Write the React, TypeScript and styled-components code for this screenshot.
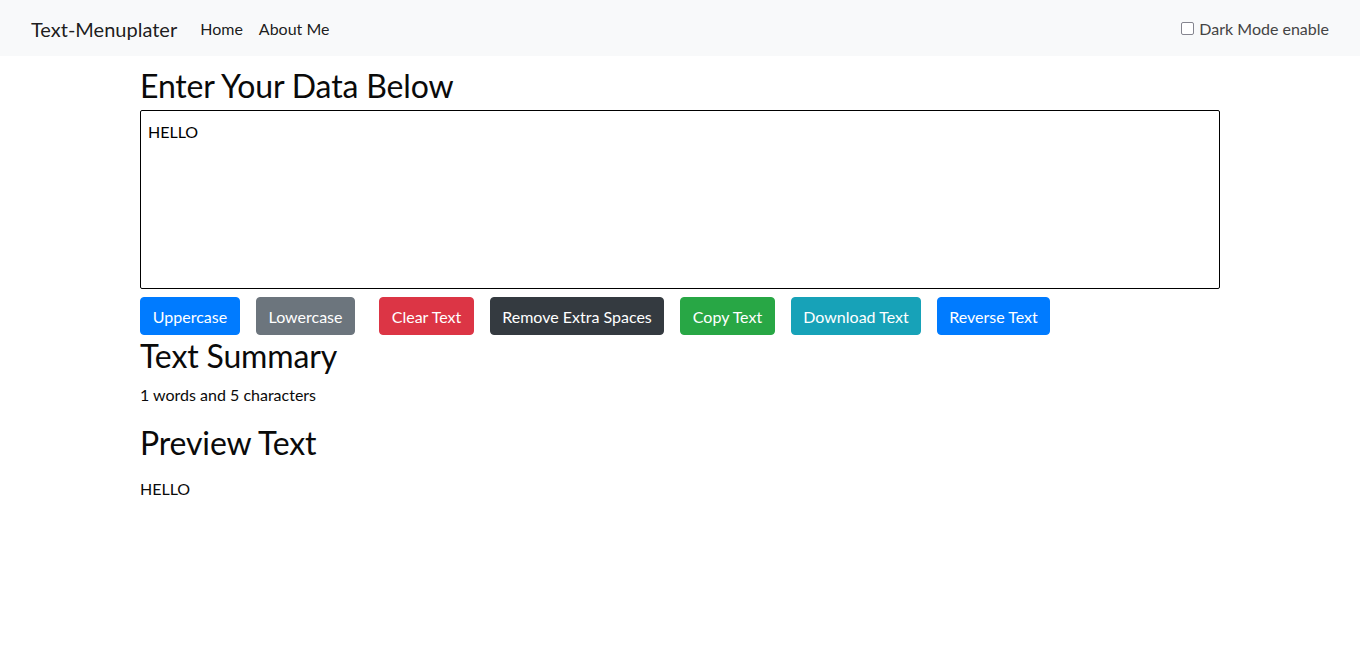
import React, { useState } from "react";
import styled, { createGlobalStyle } from "styled-components";

const GlobalStyle = createGlobalStyle`
  * { box-sizing: border-box; }
  body {
    margin: 0;
    background: #fff;
    color: #212529;
    font-family: Lato, "Noto Sans", sans-serif;
    font-size: 16px;
    line-height: 1.5;
  }
`;

const Navbar = styled.nav`
  height: 56px;
  background: #f8f9fa;
  display: flex;
  align-items: center;
  padding: 2px 31px 0 31px;
`;

const Brand = styled.a`
  font-size: 20px;
  line-height: 30px;
  color: rgba(0, 0, 0, 0.9);
  text-decoration: none;
  margin-right: 15px;
`;

const NavList = styled.ul`
  display: flex;
  list-style: none;
  margin: 0;
  padding: 0;
  flex: 1;
`;

const NavLink = styled.a`
  display: block;
  padding: 8px;
  color: rgba(0, 0, 0, 0.9);
  text-decoration: none;
  line-height: 24px;
`;

const Toggle = styled.label`
  display: flex;
  align-items: center;
  gap: 5px;
  color: #444;
  line-height: 24px;
`;

const CheckBox = styled.span`
  width: 13px;
  height: 13px;
  border: 1.5px solid #85858f;
  border-radius: 2px;
  background: #fff;
  margin-top: -1px;
`;

const Container = styled.main`
  max-width: 1080px;
  margin: 0 auto;
  padding-top: 11px;
`;

const Heading = styled.h2<{ $mt?: number; $mb?: number }>`
  font-size: 32px;
  font-weight: 400;
  line-height: 1.2;
  letter-spacing: -0.15px;
  color: #0a0a0a;
  margin: ${(p) => p.$mt ?? 0}px 0 ${(p) => p.$mb ?? 7}px 0;
`;

const TextArea = styled.textarea`
  display: block;
  width: 100%;
  height: 179px;
  border: 1px solid #000;
  border-radius: 2px;
  padding: 9px 7px;
  font-family: Lato, "Noto Sans", sans-serif;
  font-size: 16px;
  line-height: 1.5;
  color: #000;
  resize: none;
  outline: none;
`;

const ButtonRow = styled.div`
  display: flex;
  margin-top: 8px;
`;

const Button = styled.button<{ $bg: string; $w: number; $ml: number }>`
  width: ${(p) => p.$w}px;
  margin-left: ${(p) => p.$ml}px;
  height: 38px;
  padding: 7px 0 5px;
  border: 1px solid ${(p) => p.$bg};
  border-radius: 4px;
  background: ${(p) => p.$bg};
  color: #fff;
  font-family: Lato, "Noto Sans", sans-serif;
  font-size: 16px;
  line-height: 24px;
  text-align: center;
  cursor: pointer;
`;

const Para = styled.p<{ $mt?: number; $mb?: number }>`
  margin: ${(p) => p.$mt ?? 0}px 0 ${(p) => p.$mb ?? 16}px 0;
  line-height: 24px;
  color: #0a0a0a;
`;

const buttons = [
  { label: "Uppercase", bg: "#007bff", w: 100, ml: 0 },
  { label: "Lowercase", bg: "#6c757d", w: 99, ml: 16 },
  { label: "Clear Text", bg: "#dc3545", w: 95, ml: 24 },
  { label: "Remove Extra Spaces", bg: "#343a40", w: 174, ml: 16 },
  { label: "Copy Text", bg: "#28a745", w: 95, ml: 16 },
  { label: "Download Text", bg: "#17a2b8", w: 130, ml: 16 },
  { label: "Reverse Text", bg: "#007bff", w: 113, ml: 16 },
];

export default function App() {
  const [text, setText] = useState("HELLO");
  const words = text.split(/\s+/).filter((w) => w.length > 0).length;
  return (
    <>
      <GlobalStyle />
      <Navbar>
        <Brand href="#">Text-Menuplater</Brand>
        <NavList>
          <li>
            <NavLink href="#">Home</NavLink>
          </li>
          <li>
            <NavLink href="#">About Me</NavLink>
          </li>
        </NavList>
        <Toggle>
          <CheckBox />
          Dark Mode enable
        </Toggle>
      </Navbar>
      <Container>
        <Heading $mb={5}>Enter Your Data Below</Heading>
        <TextArea value={text} onChange={(e) => setText(e.target.value)} />
        <ButtonRow>
          {buttons.map((b) => (
            <Button key={b.label} $bg={b.bg} $w={b.w} $ml={b.ml}>
              {b.label}
            </Button>
          ))}
        </ButtonRow>
        <Heading $mt={2} $mb={7}>Text Summary</Heading>
        <Para $mb={17}>
          {words} words and {text.length} characters
        </Para>
        <Heading $mb={0}>Preview Text</Heading>
        <Para $mt={15}>{text}</Para>
      </Container>
    </>
  );
}
